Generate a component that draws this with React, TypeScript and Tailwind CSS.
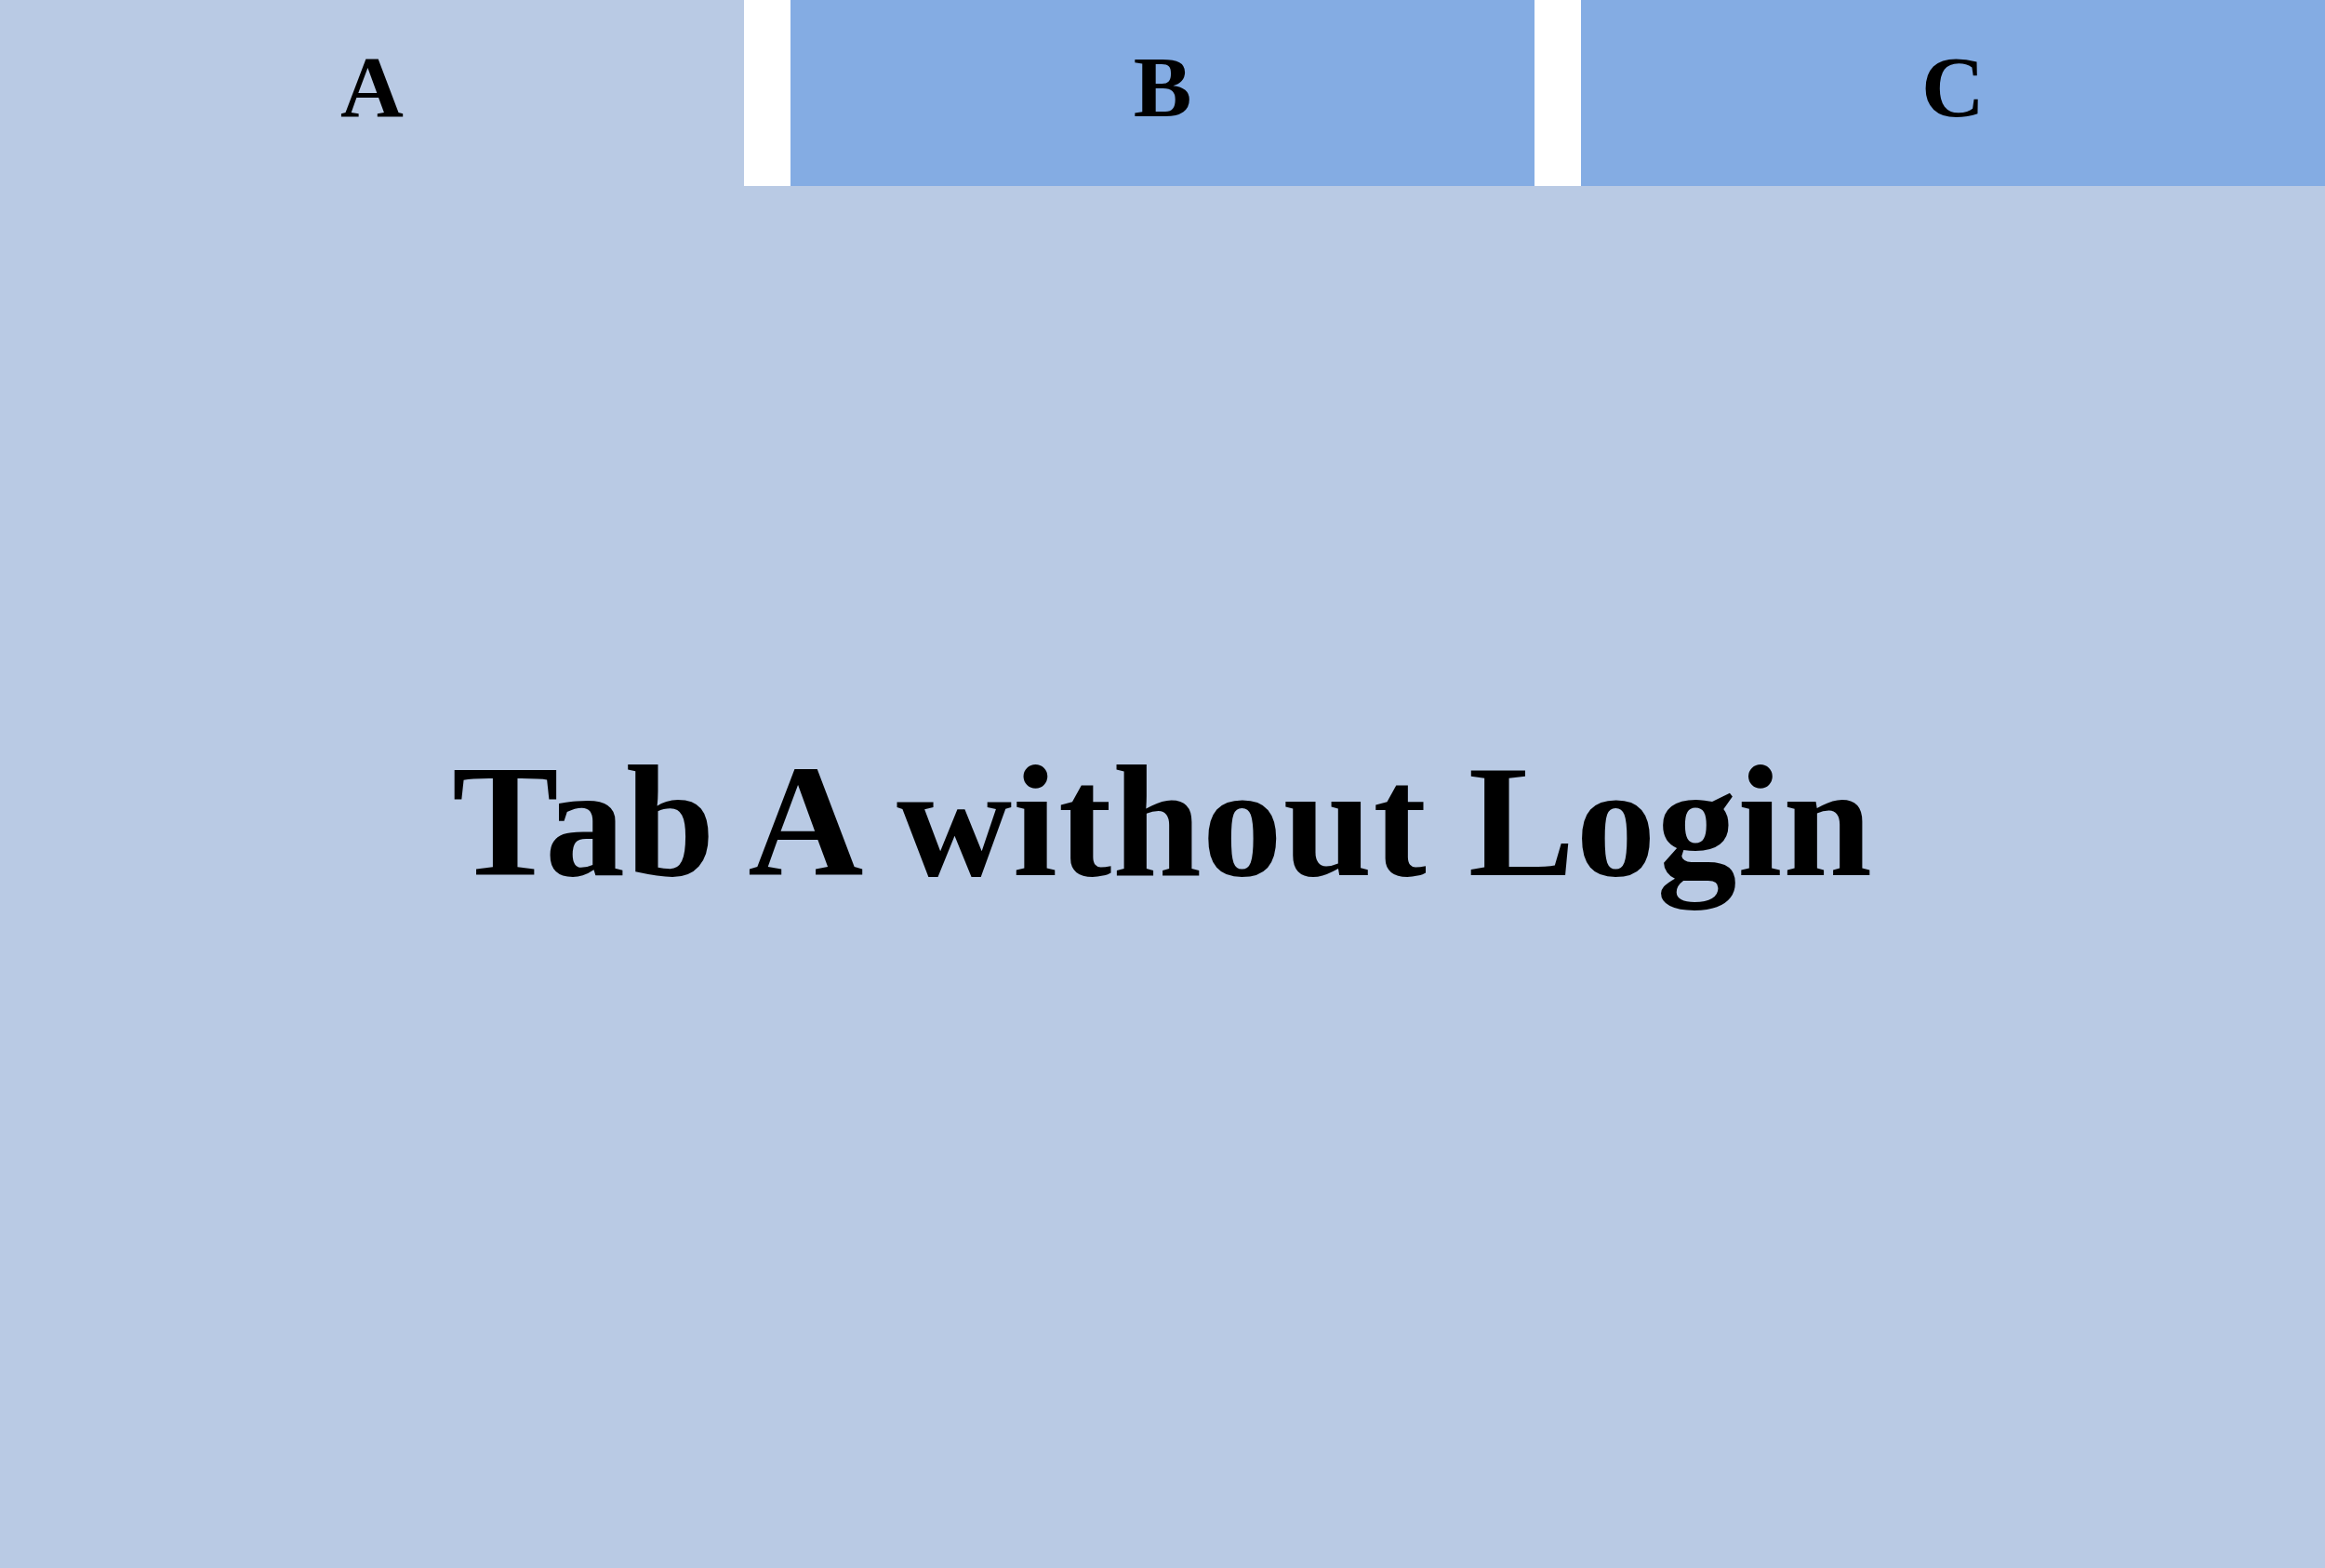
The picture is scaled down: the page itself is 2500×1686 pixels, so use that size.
import * as React from 'react';

const TABS = [
  { id: 'a', label: 'A' },
  { id: 'b', label: 'B' },
  { id: 'c', label: 'C' }
] as const;

export default function App() {
  const [active, setActive] = React.useState<string>('a');

  return (
    <div
      className="flex h-screen flex-col bg-[#b9cae4] text-black"
      style={{ fontFamily: '"Liberation Serif", "DejaVu Serif", serif' }}
    >
      <nav className="grid h-[200px] shrink-0 grid-cols-3 gap-[50px] bg-white">
        {TABS.map((t) => (
          <button
            key={t.id}
            type="button"
            onClick={() => setActive(t.id)}
            className={`flex items-center justify-center pb-[14px] text-[94px] font-bold leading-none ${
              active === t.id ? 'bg-[#b9cae4]' : 'bg-[#84ace3]'
            }`}
          >
            {t.label}
          </button>
        ))}
      </nav>
      <main className="flex flex-1 items-center justify-center pb-[120px]">
        <h1 className="text-[172px] font-bold leading-none tracking-[1px]">
          Tab {active.toUpperCase()} without Login
        </h1>
      </main>
    </div>
  );
}
